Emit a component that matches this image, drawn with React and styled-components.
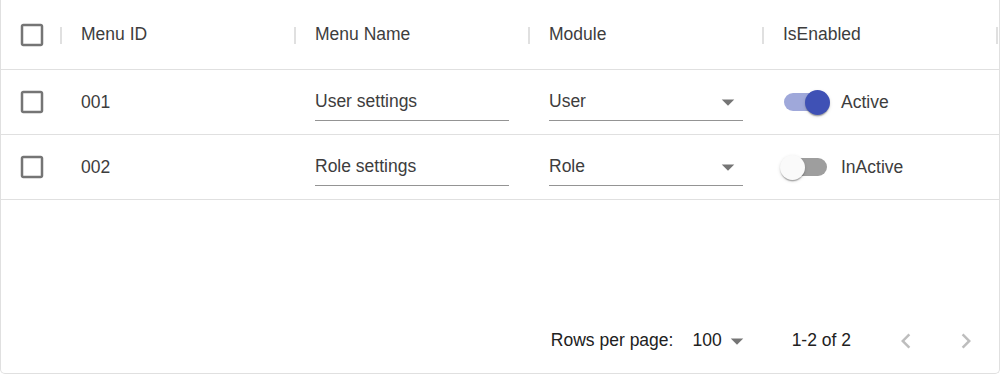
import styled, { createGlobalStyle } from "styled-components";

const GlobalStyle = createGlobalStyle`
  body {
    margin: 0;
    background: #fff;
    font-family: "Liberation Sans", Arial, sans-serif;
  }
`;

const Grid = styled.div`
  box-sizing: border-box;
  width: 1000px;
  height: 374px;
  display: flex;
  flex-direction: column;
  border: 1px solid #e0e0e0;
  border-top: none;
  border-radius: 0 0 5px 5px;
  color: #3d3d3d;
  font-size: 17.5px;
`;

const Row = styled.div`
  display: flex;
  height: ${(p) => (p.$header ? "69px" : "64px")};
  border-bottom: 1px solid #e0e0e0;
`;

const Cell = styled.div`
  position: relative;
  box-sizing: border-box;
  width: ${(p) => (p.$check ? "60px" : "234px")};
  flex: none;
  display: flex;
  align-items: center;
  justify-content: ${(p) => (p.$check ? "center" : "flex-start")};
  padding: ${(p) => (p.$check ? "0 0 0 1px" : "0 20px")};

  ${(p) =>
    p.$header &&
    `
    &::after {
      content: "";
      position: absolute;
      right: -1px;
      top: 26.5px;
      width: 2px;
      height: 17.5px;
      background: #e0e0e0;
    }
  `}
`;

const Title = styled.span`
  white-space: nowrap;
`;

const Field = styled.div`
  box-sizing: border-box;
  width: 194px;
  height: 37px;
  display: flex;
  align-items: center;
  justify-content: space-between;
  border-bottom: 1px solid #949494;
`;

const Icon = styled.svg`
  width: 30px;
  height: 30px;
  flex: none;
  fill: ${(p) => p.$fill || "rgba(0,0,0,0.54)"};
`;

const SwitchRoot = styled.span`
  position: relative;
  display: inline-block;
  width: 72.5px;
  height: 47.5px;
  margin-left: -14px;
  flex: none;
`;

const Track = styled.span`
  position: absolute;
  left: 15px;
  top: 15px;
  width: 42.5px;
  height: 17.5px;
  border-radius: 9px;
  background: ${(p) => (p.$on ? "#9fa8da" : "#9e9e9e")};
`;

const Thumb = styled.span`
  position: absolute;
  top: 11.25px;
  left: ${(p) => (p.$on ? "36.25px" : "11.25px")};
  width: 25px;
  height: 25px;
  border-radius: 50%;
  background: ${(p) => (p.$on ? "#3f51b5" : "#fafafa")};
  box-shadow: 0 2.5px 1.25px -1.25px rgba(0, 0, 0, 0.2),
    0 1.25px 1.25px 0 rgba(0, 0, 0, 0.14), 0 1.25px 3.75px 0 rgba(0, 0, 0, 0.12);
`;

const SwitchLabel = styled.span`
  margin-left: -0.5px;
`;

const Spacer = styled.div`
  flex: 1;
`;

const Footer = styled.div`
  height: 65px;
  display: flex;
  align-items: center;
  justify-content: flex-end;
  padding-right: 3px;
  color: #212121;
  font-size: 17.5px;
`;

const RowsSelect = styled.div`
  display: flex;
  align-items: center;
  margin: 0 40px 0 10px;
  padding-left: 9px;
`;

const Actions = styled.div`
  display: flex;
  margin-left: 25px;
`;

const PageButton = styled.span`
  display: flex;
  padding: 15px;
`;

const CheckIcon = () => (
  <Icon viewBox="0 0 24 24">
    <path d="M19 5v14H5V5h14m0-2H5c-1.11 0-2 .9-2 2v14c0 1.1.89 2 2 2h14c1.1 0 2-.9 2-2V5c0-1.1-.9-2-2-2z" />
  </Icon>
);

const ArrowDrop = () => (
  <Icon viewBox="0 0 24 24">
    <path d="M7 10l5 5 5-5z" />
  </Icon>
);

const rows = [
  { id: "001", name: "User settings", module: "User", on: true },
  { id: "002", name: "Role settings", module: "Role", on: false },
];

const columns = ["Menu ID", "Menu Name", "Module", "IsEnabled"];

export default function App() {
  return (
    <>
      <GlobalStyle />
      <Grid>
        <Row $header>
          <Cell $check $header>
            <CheckIcon />
          </Cell>
          {columns.map((c) => (
            <Cell key={c} $header>
              <Title>{c}</Title>
            </Cell>
          ))}
        </Row>

        {rows.map((r) => (
          <Row key={r.id}>
            <Cell $check>
              <CheckIcon />
            </Cell>
            <Cell>{r.id}</Cell>
            <Cell>
              <Field>{r.name}</Field>
            </Cell>
            <Cell>
              <Field>
                {r.module}
                <ArrowDrop />
              </Field>
            </Cell>
            <Cell>
              <SwitchRoot>
                <Track $on={r.on} />
                <Thumb $on={r.on} />
              </SwitchRoot>
              <SwitchLabel>{r.on ? "Active" : "InActive"}</SwitchLabel>
            </Cell>
          </Row>
        ))}

        <Spacer />

        <Footer>
          <span>Rows per page:</span>
          <RowsSelect>
            100
            <ArrowDrop />
          </RowsSelect>
          <span>1-2 of 2</span>
          <Actions>
            <PageButton>
              <Icon viewBox="0 0 24 24" $fill="rgba(0,0,0,0.26)">
                <path d="M15.41 7.41L14 6l-6 6 6 6 1.41-1.41L10.83 12z" />
              </Icon>
            </PageButton>
            <PageButton>
              <Icon viewBox="0 0 24 24" $fill="rgba(0,0,0,0.26)">
                <path d="M10 6L8.59 7.41 13.17 12l-4.58 4.59L10 18l6-6z" />
              </Icon>
            </PageButton>
          </Actions>
        </Footer>
      </Grid>
    </>
  );
}
